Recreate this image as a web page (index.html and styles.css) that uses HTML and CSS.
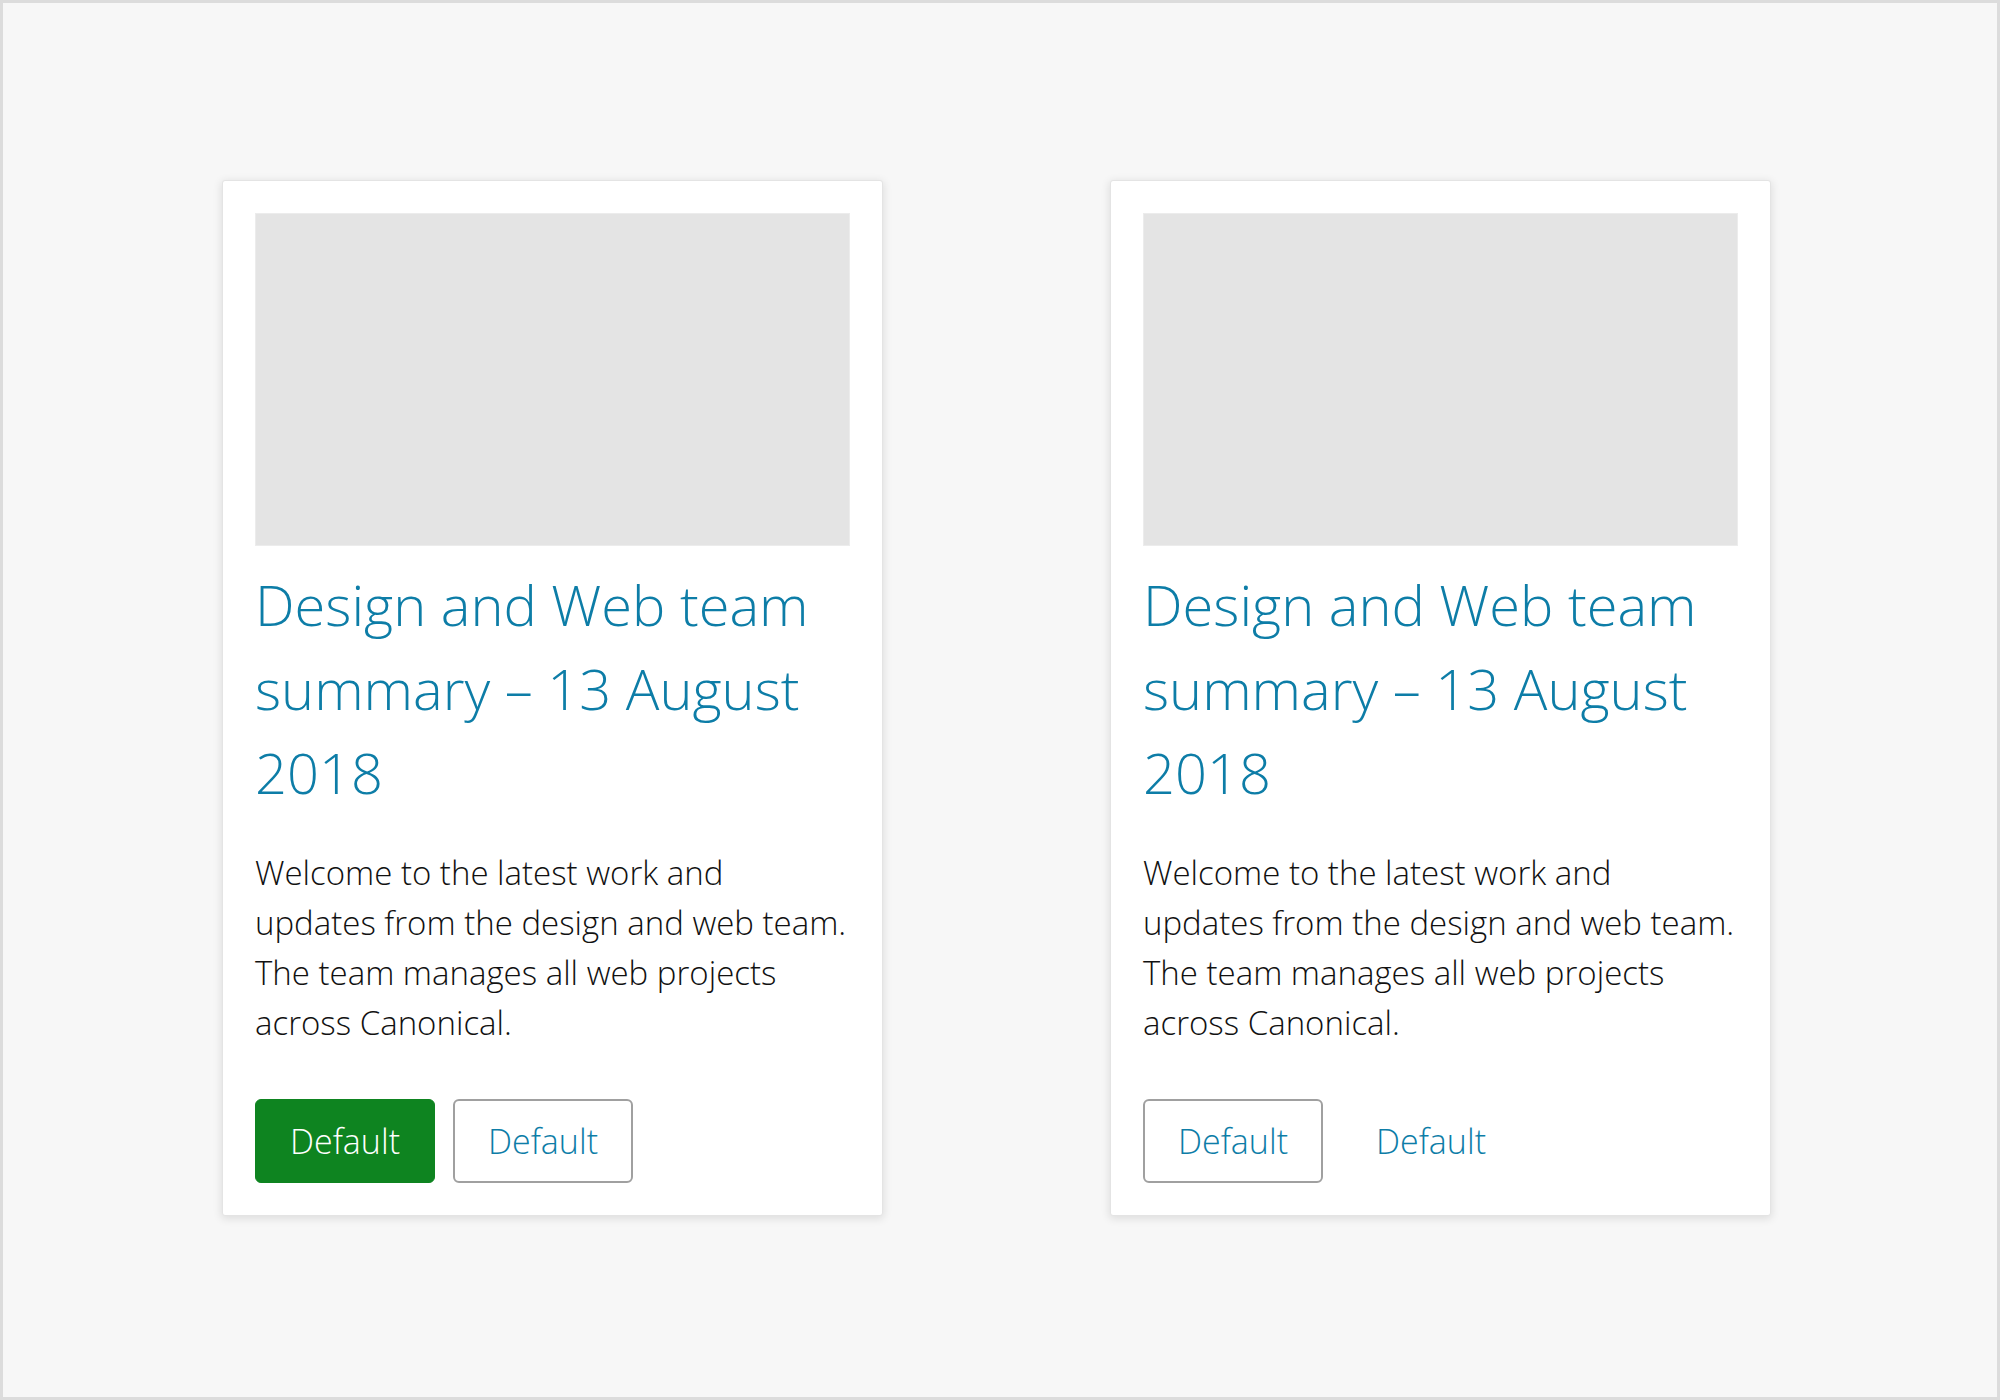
FILE: index.html
```html
<!DOCTYPE html>
<html lang="en">
<head>
<meta charset="utf-8">
<title>Cards</title>
<link rel="stylesheet" href="styles.css">
</head>
<body>
<div class="frame">
  <div class="cards">
    <article class="card">
      <div class="card-image"></div>
      <h3 class="card-title">Design and Web team summary – 13 August 2018</h3>
      <p class="card-text">Welcome to the latest work and<br>updates from the design and web team.<br>The team manages all web projects<br>across Canonical.</p>
      <div class="card-actions">
        <button class="btn btn-positive">Default</button>
        <button class="btn btn-outline">Default</button>
      </div>
    </article>
    <article class="card">
      <div class="card-image"></div>
      <h3 class="card-title">Design and Web team summary – 13 August 2018</h3>
      <p class="card-text">Welcome to the latest work and<br>updates from the design and web team.<br>The team manages all web projects<br>across Canonical.</p>
      <div class="card-actions">
        <button class="btn btn-outline">Default</button>
        <button class="btn btn-link">Default</button>
      </div>
    </article>
  </div>
</div>
</body>
</html>
```
FILE: styles.css
```css
html, body {
  margin: 0;
  padding: 0;
}
body {
  width: 2000px;
  height: 1400px;
  font-family: "Open Sans", "Noto Sans", sans-serif;
  font-weight: 300;
  color: #111111;
}
.frame {
  box-sizing: border-box;
  width: 2000px;
  height: 1400px;
  border: 3px solid #dcdcdc;
  background: #f7f7f7;
  padding: 177px 0 0 219px;
}
.cards {
  display: flex;
  align-items: flex-start;
  gap: 227px;
}
.card {
  box-sizing: border-box;
  width: 661px;
  height: 1036px;
  background: #ffffff;
  border: 1px solid #e4e4e4;
  border-radius: 3px;
  box-shadow: 0 2px 8px 1px rgba(0, 0, 0, 0.10);
  padding: 32px;
  display: flex;
  flex-direction: column;
}
.card-image {
  box-sizing: border-box;
  height: 333px;
  background: #e4e4e4;
  border: 1px solid #ececec;
}
.card-title {
  margin: 16px 0 0;
  font-size: 56px;
  line-height: 84px;
  font-weight: 300;
  color: #0d7da7;
}
.card-text {
  margin: 34px 0 0;
  font-size: 33px;
  line-height: 50px;
  font-weight: 300;
  color: #111111;
  white-space: nowrap;
}
.card-actions {
  margin-top: 51px;
  display: flex;
  gap: 18px;
}
.btn {
  box-sizing: border-box;
  height: 84px;
  width: 180px;
  padding: 0;
  border: 1px solid transparent;
  border-radius: 6px;
  font-family: "Open Sans", "Noto Sans", sans-serif;
  font-weight: 300;
  font-size: 34px;
  background: transparent;
  color: #0d7da7;
  display: flex;
  align-items: center;
  justify-content: center;
}
.btn-positive {
  background: #0e8420;
  border-color: #0e8420;
  color: #ffffff;
}
.btn-outline {
  border: 2px solid #a0a0a0;
  background: #ffffff;
}
.btn-link {
  border-color: transparent;
}
```
